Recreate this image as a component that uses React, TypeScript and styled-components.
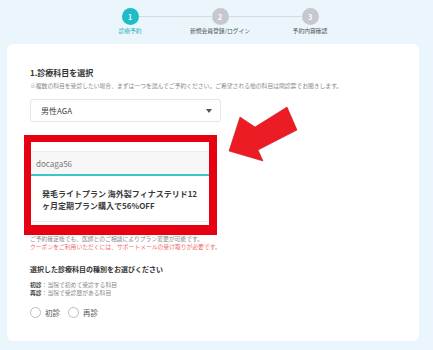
// reservation step 1 page, with the coupon field highlighted by a red frame + arrow

import styled, { createGlobalStyle } from "styled-components";

const GlobalStyle = createGlobalStyle`
  body {
    margin: 0;
    background: #eaf6fc;
    font-family: "Noto Sans CJK JP", "Noto Sans", sans-serif;
    color: #333;
  }
`;

const Page = styled.div`
  padding: 8px 14px 9px 7px;
`;

const Stepper = styled.div`
  display: flex;
  margin-left: 78px;
  width: 270px;
`;

const Step = styled.div<{ $last?: boolean }>`
  width: 90px;
  display: flex;
  flex-direction: column;
  align-items: center;
  position: relative;

  /* connector line to the next circle */
  &::after {
    content: "";
    display: ${(p) => (p.$last ? "none" : "block")};
    position: absolute;
    top: 8px;
    left: calc(50% + 9px);
    width: 72px;
    height: 1px;
    background: #d6d9e0;
  }
`;

const Circle = styled.div<{ $active?: boolean }>`
  width: 17px;
  height: 17px;
  border-radius: 50%;
  background: ${(p) => (p.$active ? "#1dbcc6" : "#c6c7cf")};
  color: #fff;
  font-size: 7px;
  font-weight: 700;
  display: flex;
  align-items: center;
  justify-content: center;
`;

const StepLabel = styled.div<{ $active?: boolean }>`
  margin-top: 2px;
  font-size: 5.8px;
  line-height: 8px;
  white-space: nowrap;
  color: ${(p) => (p.$active ? "#1db3bd" : "#555")};
`;

const Card = styled.div`
  margin-top: 9px;
  background: #fff;
  border-radius: 6px;
  height: 297px;
  box-sizing: border-box;
  padding: 23px 20px 0 23px;
  position: relative;
`;

const Title = styled.div`
  font-size: 8px;
  line-height: 12px;
  font-weight: 700;
  color: #333;
`;

const Note = styled.div<{ $red?: boolean; $top?: number }>`
  font-size: 5.8px;
  line-height: 8px;
  white-space: nowrap;
  margin-top: ${(p) => p.$top ?? 0}px;
  color: ${(p) => (p.$red ? "#f06a6a" : "#888")};

  b {
    color: #444;
    font-weight: 700;
  }
`;

const Select = styled.div`
  margin-top: 9px;
  width: 191px;
  height: 23px;
  box-sizing: border-box;
  border: 1px solid #e6e6e6;
  border-radius: 3px;
  display: flex;
  align-items: center;
  justify-content: space-between;
  padding: 0 8px 0 10px;
  font-size: 8px;
  color: #444;
`;

const Caret = styled.span`
  width: 0;
  height: 0;
  border-left: 3px solid transparent;
  border-right: 3px solid transparent;
  border-top: 4px solid #555;
`;

const RedFrame = styled.div`
  margin: 13px 0 0 -6px;
  width: 193px;
  height: 100px;
  box-sizing: border-box;
  border-style: solid;
  border-color: #e60012;
  border-width: 7px 8px 10px 7px;
  padding-top: 9px;
  background: #fff;
`;

const CouponInput = styled.div`
  height: 25px;
  box-sizing: border-box;
  background: #f7f7f7;
  border-top: 1px solid #ececec;
  border-bottom: 2px solid #3cc4cc;
  display: flex;
  align-items: center;
  padding-left: 5px;
  font-size: 8px;
  color: #777;
`;

const Suggestion = styled.div`
  padding: 12px 5px 10px 11px;
  border-bottom: 1px solid #ebebeb;
  font-size: 8px;
  line-height: 11.5px;
  font-weight: 700;
  color: #3a3a3a;
`;

const SubTitle = styled.div`
  margin-top: 13px;
  font-size: 7px;
  line-height: 10px;
  font-weight: 700;
  color: #333;
`;

const RadioRow = styled.div`
  margin-top: 10px;
  display: flex;
  align-items: center;
  gap: 8px;
`;

const Radio = styled.label`
  display: flex;
  align-items: center;
  gap: 4px;
  font-size: 7.5px;
  color: #555;
`;

const RadioDot = styled.span`
  width: 11px;
  height: 11px;
  box-sizing: border-box;
  border-radius: 50%;
  border: 1px solid #bcbcbc;
  background: #fff;
`;

const Arrow = styled.svg`
  position: absolute;
  left: 215px;
  top: 56px;
  width: 85px;
  height: 70px;
`;

const steps = ["診療予約", "新規会員登録/ログイン", "予約内容確認"];

export default function App() {
  return (
    <Page>
      <GlobalStyle />
      <Stepper>
        {steps.map((s, i) => (
          <Step key={s} $last={i === steps.length - 1}>
            <Circle $active={i === 0}>{i + 1}</Circle>
            <StepLabel $active={i === 0}>{s}</StepLabel>
          </Step>
        ))}
      </Stepper>

      <Card>
        <Title>1.診療科目を選択</Title>
        <Note $top={3}>
          ※複数の科目を受診したい場合、まずは一つを選んでご予約ください。ご希望される他の科目は問診票でお聞きします。
        </Note>

        <Select>
          <span>男性AGA</span>
          <Caret />
        </Select>

        <RedFrame>
          <CouponInput>docaga56</CouponInput>
          <Suggestion>
            発毛ライトプラン 海外製フィナステリド12ヶ月定期プラン購入で56%OFF
          </Suggestion>
        </RedFrame>

        <Note>ご予約確定後でも、医師とのご相談によりプラン変更が可能です。</Note>
        <Note $red>クーポンをご利用いただくには、サポートメールの受け取りが必要です。</Note>

        <SubTitle>選択した診療科目の種別をお選びください</SubTitle>
        <Note $top={7}>
          <b>初診</b>：当院で初めて受診する科目
        </Note>
        <Note>
          <b>再診</b>：当院で受診歴がある科目
        </Note>

        <RadioRow>
          <Radio>
            <RadioDot />
            初診
          </Radio>
          <Radio>
            <RadioDot />
            再診
          </Radio>
        </RadioRow>

        {/* annotation arrow pointing at the coupon field */}
        <Arrow viewBox="222 100 85 70">
          <polygon
            points="229,151 240,117 255,127 287,107 297,130 258,150 263,161"
            fill="#ec1c24"
            stroke="#c8141b"
            strokeWidth="0.6"
            strokeLinejoin="miter"
          />
        </Arrow>
      </Card>
    </Page>
  );
}
